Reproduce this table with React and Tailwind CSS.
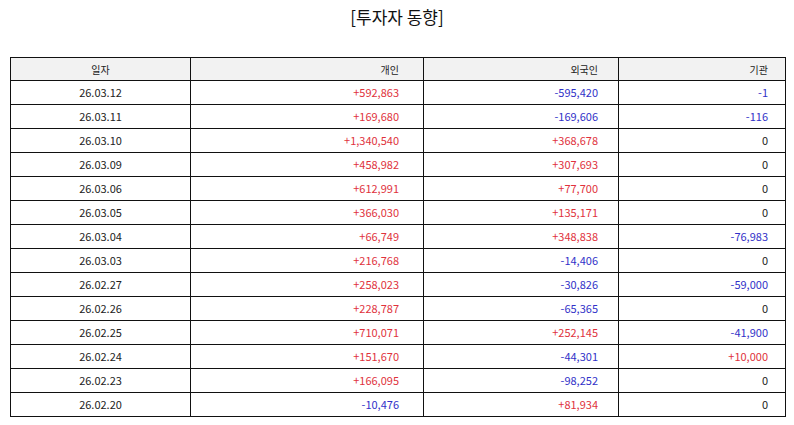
import React from "react";

const rows = [
  ["26.03.12", "+592,863", "-595,420", "-1"],
  ["26.03.11", "+169,680", "-169,606", "-116"],
  ["26.03.10", "+1,340,540", "+368,678", "0"],
  ["26.03.09", "+458,982", "+307,693", "0"],
  ["26.03.06", "+612,991", "+77,700", "0"],
  ["26.03.05", "+366,030", "+135,171", "0"],
  ["26.03.04", "+66,749", "+348,838", "-76,983"],
  ["26.03.03", "+216,768", "-14,406", "0"],
  ["26.02.27", "+258,023", "-30,826", "-59,000"],
  ["26.02.26", "+228,787", "-65,365", "0"],
  ["26.02.25", "+710,071", "+252,145", "-41,900"],
  ["26.02.24", "+151,670", "-44,301", "+10,000"],
  ["26.02.23", "+166,095", "-98,252", "0"],
  ["26.02.20", "-10,476", "+81,934", "0"],
];

function color(v) {
  if (v.startsWith("+")) return "text-[#e0323c]";
  if (v.startsWith("-")) return "text-[#3131c8]";
  return "text-[#222]";
}

const pad = ["", "pr-[24px]", "pr-[20px]", "pr-[17px]"];
const cell = "border-[1.5px] border-[#111]";

export default function App() {
  return (
    <div className="w-[794px] h-[425px] bg-white font-['Noto_Sans_CJK_KR',sans-serif] text-[#222]">
      <h1 className="pt-[5px] text-center text-[17px] leading-[24px] text-[#111]">
        [투자자 동향]
      </h1>
      <table className="mt-[28px] ml-[10px] w-[775px] border-collapse table-fixed text-[11px]">
        <colgroup>
          <col className="w-[180px]" />
          <col className="w-[233px]" />
          <col className="w-[195px]" />
          <col className="w-[167px]" />
        </colgroup>
        <thead>
          <tr className="h-[23px] bg-[#f2f2f2]">
            <th className={`${cell} font-normal text-[10px] text-center`}>일자</th>
            <th className={`${cell} font-normal text-[10px] text-right ${pad[1]}`}>개인</th>
            <th className={`${cell} font-normal text-[10px] text-right ${pad[2]}`}>외국인</th>
            <th className={`${cell} font-normal text-[10px] text-right ${pad[3]}`}>기관</th>
          </tr>
        </thead>
        <tbody>
          {rows.map((r) => (
            <tr key={r[0]} className="h-[24px]">
              <td className={`${cell} text-center`}>{r[0]}</td>
              <td className={`${cell} text-right ${pad[1]} ${color(r[1])}`}>{r[1]}</td>
              <td className={`${cell} text-right ${pad[2]} ${color(r[2])}`}>{r[2]}</td>
              <td className={`${cell} text-right ${pad[3]} ${color(r[3])}`}>{r[3]}</td>
            </tr>
          ))}
        </tbody>
      </table>
    </div>
  );
}
